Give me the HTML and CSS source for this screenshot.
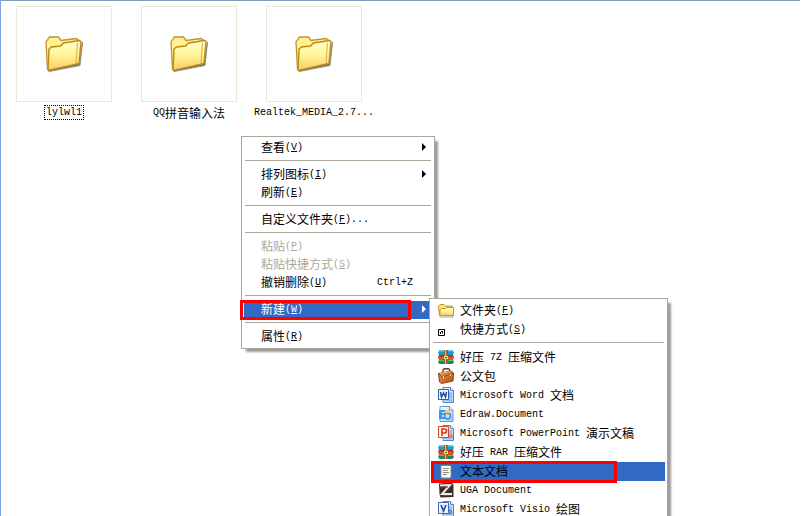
FILE: index.html
```html
<!DOCTYPE html>
<html lang="zh-CN">
<head>
<meta charset="utf-8">
<title>文件夹</title>
<link rel="stylesheet" href="styles.css">
</head>
<body>
<svg class="defs" aria-hidden="true">
  <defs>
    <linearGradient id="fold" x1="0" y1="0" x2="0" y2="1"><stop offset="0" stop-color="#fffed0"/><stop offset=".45" stop-color="#fff79a"/><stop offset="1" stop-color="#fcc964"/></linearGradient>
    <linearGradient id="sheet" x1="0" y1="0" x2="1" y2="1"><stop offset="0" stop-color="#ffffff"/><stop offset="1" stop-color="#a9c8f3"/></linearGradient>
    <linearGradient id="leather" x1="0" y1="0" x2="1" y2="1"><stop offset="0" stop-color="#e9a05a"/><stop offset="1" stop-color="#b04d12"/></linearGradient>
    <symbol id="folder" viewBox="0 0 38 38">
      <path d="M4 36.500 35 30.500 37.500 7 34 28 5 34z" fill="#55534a" stroke="#77756c" stroke-width="1" opacity=".8"/>
      <path d="M2.500 34 1 7 4.500 2h9L16 5.500 31 3.500 33.500 5v22z" fill="#fff391" stroke="#c09428" stroke-width="1.300"/>
      <path d="M3 35 4 14 6.500 12 15.500 11 18.500 8 34.500 5.500 36 6.500 34 28.500 3.500 35.500z" fill="url(#fold)" stroke="#b98b16" stroke-width="1.400"/>
      <path d="M32.500 8 31 28" stroke="#e4aa3c" stroke-width="1" fill="none"/>
    </symbol>
    <symbol id="smallfolder" viewBox="0 0 16 16">
      <path d="M1 14.500h13l1.500-7v7l-1 1H2z" fill="#6f6a58" opacity=".6"/>
      <path d="M1.500 13.500.5 4 2 2.500h4L7.500 4H14l.5 2v7.500z" fill="#ffe777" stroke="#c5952a"/>
      <path d="M2 13.500V7.500L3.500 6.500h4L9 5.500h6.500v8z" fill="url(#fold)" stroke="#c5952a"/>
    </symbol>
    <symbol id="shortcut" viewBox="0 0 16 16">
      <path d="M.5 8.500h6v6h-6z" fill="#fff" stroke="#000"/>
      <path d="M2 13v-2h1v-1h-.5V10H5v2.500H4V11H3v2z" fill="#000"/>
    </symbol>
    <symbol id="archive" viewBox="0 0 16 16">
      <path d="M1.500 1h13L16 3.500 15 6H1L0 3.500z" fill="#1b9ad0"/><path d="M1.500 1h13l.8 1.500H.7z" fill="#61cbe9"/>
      <path d="M1 6h14l1 2.500L15 11H1L0 8.500z" fill="#dc5226"/><path d="M1 6h14l.5 1.500H.5z" fill="#a12f20"/>
      <path d="M1 11h14l1 2-1.500 2h-13L0 13z" fill="#198b50"/><path d="M1 11h14l.5 1H.5z" fill="#66bd56"/>
      <path d="M6 1h4v14H6z" fill="#8c6a32"/><path d="M7 1h1v14H7z" fill="#dfb961"/>
      <path d="M6 7h4v3H6z" fill="#f0dc91"/><path d="M7 8h2v1H7z" fill="#76501b"/>
    </symbol>
    <symbol id="briefcase" viewBox="0 0 16 16">
      <path d="M5 4.500V2l1-1 4-.5 1.500 1V4" fill="none" stroke="#70320e" stroke-width="1.400"/>
      <path d="M.5 5.500 13 3l2.500 2-.5 8-11.500 2.500L1.500 14z" fill="url(#leather)" stroke="#91400f"/>
      <path d="M1 6 4 9l11-3.500" fill="none" stroke="#9a4a18"/><path d="M2 5.500 12.500 3.500" stroke="#f6bb7d" fill="none"/>
      <path d="M5 8h1v2H5zM12 6h1v2h-1z" fill="#ffe48c"/>
    </symbol>
    <symbol id="paper" viewBox="0 0 16 16">
      <path d="M5 .5h7.500l3 3v12H5z" fill="url(#sheet)" stroke="#5684c7"/>
      <path d="M12.500.5v3h3" fill="#fff" stroke="#5684c7"/>
      <path d="M11 6h3M11 8h3M11 10h3M6 13h8" stroke="#6e9bd8"/>
    </symbol>
    <symbol id="word" viewBox="0 0 16 16"><use href="#paper"/>
      <path d="M.5 2.500h10v10H.5z" fill="#edf5ff" stroke="#2b5da9"/><path d="m2.500 5 1 5L5.500 6l2 4 1-5" fill="none" stroke="#1c4e9f" stroke-width="1.500"/>
    </symbol>
    <symbol id="edraw" viewBox="0 0 16 16">
      <path d="M2 .5h9.500L15 4v11.500H2z" fill="url(#sheet)" stroke="#6b99d4"/><path d="M11.500.5V4H15" fill="#fff" stroke="#6b99d4"/>
      <path d="M1 4h7v2H4v1h3v2H4v2h4v2H1z" fill="#319de8"/><circle cx="9.500" cy="10" r="3" fill="#b9ddff" stroke="#3d8de0" stroke-width="1.500"/><path d="M7 4h4v3H7z" fill="#ffca4b"/>
    </symbol>
    <symbol id="powerpoint" viewBox="0 0 16 16"><use href="#paper"/>
      <path d="M.5 1.500h10v11H.5z" fill="#fff2ec" stroke="#cf4823"/><path d="M4 11V4h2.500a2 2 0 0 1 0 4H4" fill="none" stroke="#cf3b16" stroke-width="1.600"/>
      <path d="M11 10h4v3h-4z" fill="#e98661"/>
    </symbol>
    <symbol id="notepad" viewBox="0 0 16 16">
      <path d="M3 2h10v12l-1 1H3z" fill="#fffff1" stroke="#8a8a70"/><path d="M4 1v2M6 1v2M8 1v2M10 1v2M12 1v2" stroke="#4b4b43"/>
      <path d="M5 5.500h6M5 7.500h5M5 9.500h6M5 11.500h4" stroke="#898989"/>
    </symbol>
    <symbol id="uga" viewBox="0 0 16 16">
      <path d="M1 1.500 14 .5 15.500 3v12l-13 .5L1.500 12z" fill="#362f2d"/>
      <path d="M2 3.500 12 3 4 12h10" fill="none" stroke="#f0e9e4" stroke-width="2"/><path d="M2 5h8M5 13.500h9" stroke="#9b3635"/>
    </symbol>
    <symbol id="visio" viewBox="0 0 16 16"><use href="#paper"/>
      <path d="M.5 1.500h10v11H.5z" fill="#edf3ff" stroke="#4164b8"/><path d="m3 4 2.500 6L8 4" fill="none" stroke="#244da7" stroke-width="1.700"/>
      <path d="m12 9 2 2-2 2-2-2z" fill="#86a6e4" stroke="#456db9"/>
    </symbol>
  </defs>
</svg>

<main class="files">
  <a class="file" href="#"><span class="thumb"><svg><use href="#folder"/></svg></span><span class="name focused"><span class="en">lylwl1</span></span></a>
  <a class="file" href="#"><span class="thumb"><svg><use href="#folder"/></svg></span><span class="name"><span class="en">QQ</span>拼音输入法</span></a>
  <a class="file" href="#"><span class="thumb"><svg><use href="#folder"/></svg></span><span class="name"><span class="en">Realtek_MEDIA_2.7...</span></span></a>
</main>

<div class="menu context" role="menu">
  <button class="item" role="menuitem">查看<span class="en key">(<u>V</u>)</span><i class="arrow"></i></button>
  <hr>
  <button class="item" role="menuitem">排列图标<span class="en key">(<u>I</u>)</span><i class="arrow"></i></button>
  <button class="item" role="menuitem">刷新<span class="en key">(<u>E</u>)</span></button>
  <hr>
  <button class="item" role="menuitem">自定义文件夹<span class="en key">(<u>F</u>)...</span></button>
  <hr>
  <button class="item" role="menuitem" disabled>粘贴<span class="en key">(<u>P</u>)</span></button>
  <button class="item" role="menuitem" disabled>粘贴快捷方式<span class="en key">(<u>S</u>)</span></button>
  <button class="item" role="menuitem">撤销删除<span class="en key">(<u>U</u>)</span><span class="en accel">Ctrl+Z</span></button>
  <hr>
  <div class="parent">
    <button class="item active" role="menuitem">新建<span class="en key">(<u>W</u>)</span><i class="arrow"></i></button>
    <span class="mark mark-new"></span>
    <div class="menu submenu" role="menu">
      <button class="item" role="menuitem"><svg><use href="#smallfolder"/></svg>文件夹<span class="en key">(<u>F</u>)</span></button>
      <button class="item" role="menuitem"><svg><use href="#shortcut"/></svg>快捷方式<span class="en key">(<u>S</u>)</span></button>
      <hr>
      <button class="item" role="menuitem"><svg><use href="#archive"/></svg>好压<span class="en"> 7Z </span>压缩文件</button>
      <button class="item" role="menuitem"><svg><use href="#briefcase"/></svg>公文包</button>
      <button class="item" role="menuitem"><svg><use href="#word"/></svg><span class="en">Microsoft Word </span>文档</button>
      <button class="item" role="menuitem"><svg><use href="#edraw"/></svg><span class="en">Edraw.Document</span></button>
      <button class="item" role="menuitem"><svg><use href="#powerpoint"/></svg><span class="en">Microsoft PowerPoint </span>演示文稿</button>
      <button class="item" role="menuitem"><svg><use href="#archive"/></svg>好压<span class="en"> RAR </span>压缩文件</button>
      <div class="parent">
        <button class="item chosen" role="menuitem"><svg><use href="#notepad"/></svg>文本文档</button>
        <span class="mark mark-text"></span>
      </div>
      <button class="item" role="menuitem"><svg><use href="#uga"/></svg><span class="en">UGA Document</span></button>
      <button class="item" role="menuitem"><svg><use href="#visio"/></svg><span class="en">Microsoft Visio </span>绘图</button>
    </div>
  </div>
  <hr>
  <button class="item" role="menuitem">属性<span class="en key">(<u>R</u>)</span></button>
</div>
</body>
</html>
```
FILE: styles.css
```css
* { box-sizing: border-box; }

html { background: #fff; overflow: hidden; }

body {
  margin: 0 5px 0 0;
  min-height: 100vh;
  border-top: 1px solid #7b9ebd;
  border-left: 1px solid #7ba2e7;
  color: #000;
  font: 12px/18px "Noto Sans CJK SC", sans-serif;
}

.defs { position: absolute; width: 0; height: 0; }

.en {
  font-family: "Liberation Mono", monospace;
  font-size: 10px;
  white-space: pre;
}

.files { display: flex; flex-wrap: wrap; gap: 5px; padding: 5px 3px; }

.file {
  display: flex;
  flex-direction: column;
  align-items: center;
  gap: 3px;
  width: 120px;
  color: inherit;
  text-decoration: none;
}

.thumb {
  display: grid;
  place-items: center;
  width: 96px;
  height: 96px;
  border: 1px solid #ece9d8;
}

.thumb svg { width: 38px; height: 38px; }

.name {
  display: flex;
  align-items: center;
  height: 15px;
  padding: 0 2px;
  line-height: 15px;
  white-space: nowrap;
}

.focused { outline: 1px dotted #000; outline-offset: -1px; }

.menu {
  position: absolute;
  padding: 2px;
  background: #fff;
  border: 1px solid #aca899;
  box-shadow: 4px 4px 2px -1px #9b9b9b;
}

.context { left: 241px; top: 136px; width: 194px; }
.submenu { left: 185px; top: -3px; width: 239px; }

.menu hr { height: 1px; margin: 3px 1px 5px; border: 0; background: #aca899; }

.item {
  display: flex;
  align-items: center;
  width: 100%;
  height: 18px;
  padding: 0 6px 2px 17px;
  border: 0;
  background: none;
  color: inherit;
  font: inherit;
  text-align: left;
  white-space: nowrap;
}

.item .en { margin-top: 2px; }
.item:disabled { color: #aca899; }
.accel { margin-left: auto; padding-right: 13px; }

.arrow {
  margin-left: auto;
  border: 4px solid transparent;
  border-left-color: currentColor;
  border-right: 0;
}

.active { background: #316ac5; color: #fff; }
.chosen { background: #316ac5; }

.submenu { color: #000; }
.submenu .item { height: 19px; padding: 0 6px 2px; }
.submenu svg { flex: none; width: 16px; height: 16px; margin-right: 6px; }

.parent { position: relative; }

.mark { position: absolute; border: 3px solid #f00; pointer-events: none; }
.mark-new { left: -4px; top: -1px; width: 171px; height: 20px; }
.mark-text { left: -1px; top: -1px; width: 186px; height: 22px; }
```
